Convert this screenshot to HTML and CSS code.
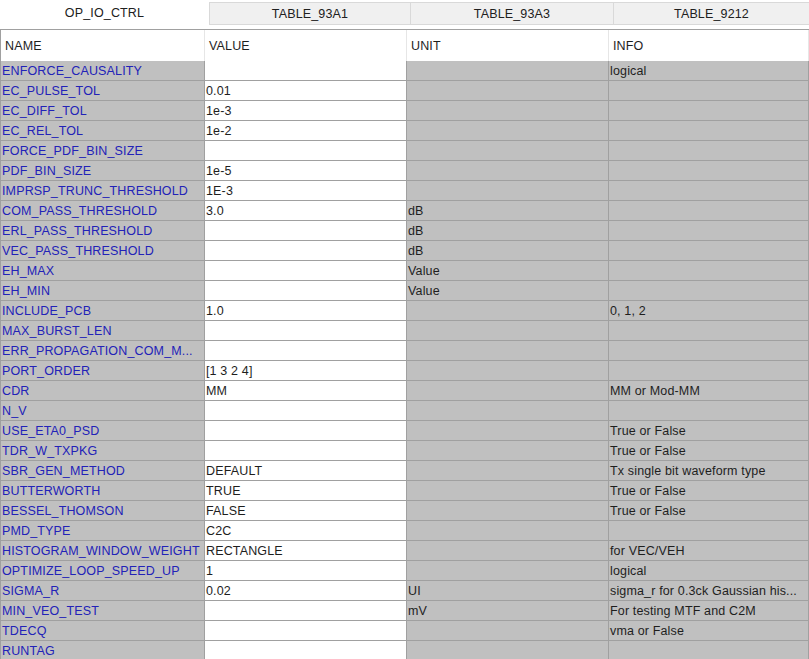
FILE: index.html
```html
<!DOCTYPE html>
<html>
<head>
  <meta charset="utf-8">
  <title>OP_IO_CTRL</title>
  <link rel="stylesheet" href="styles.css">
</head>
<body>
  <div class="tabs">
    <div class="tab active">OP_IO_CTRL</div>
    <div class="tab">TABLE_93A1</div>
    <div class="tab">TABLE_93A3</div>
    <div class="tab">TABLE_9212</div>
  </div>

  <div class="grid">
    <div class="head">NAME</div><div class="head">VALUE</div><div class="head">UNIT</div><div class="head">INFO</div>

    <div class="name">ENFORCE_CAUSALITY</div><div class="val"></div><div class="cell"></div><div class="cell">logical</div>
    <div class="name">EC_PULSE_TOL</div><div class="val">0.01</div><div class="cell"></div><div class="cell"></div>
    <div class="name">EC_DIFF_TOL</div><div class="val">1e-3</div><div class="cell"></div><div class="cell"></div>
    <div class="name">EC_REL_TOL</div><div class="val">1e-2</div><div class="cell"></div><div class="cell"></div>
    <div class="name">FORCE_PDF_BIN_SIZE</div><div class="val"></div><div class="cell"></div><div class="cell"></div>
    <div class="name">PDF_BIN_SIZE</div><div class="val">1e-5</div><div class="cell"></div><div class="cell"></div>
    <div class="name">IMPRSP_TRUNC_THRESHOLD</div><div class="val">1E-3</div><div class="cell"></div><div class="cell"></div>
    <div class="name">COM_PASS_THRESHOLD</div><div class="val">3.0</div><div class="cell">dB</div><div class="cell"></div>
    <div class="name">ERL_PASS_THRESHOLD</div><div class="val"></div><div class="cell">dB</div><div class="cell"></div>
    <div class="name">VEC_PASS_THRESHOLD</div><div class="val"></div><div class="cell">dB</div><div class="cell"></div>
    <div class="name">EH_MAX</div><div class="val"></div><div class="cell">Value</div><div class="cell"></div>
    <div class="name">EH_MIN</div><div class="val"></div><div class="cell">Value</div><div class="cell"></div>
    <div class="name">INCLUDE_PCB</div><div class="val">1.0</div><div class="cell"></div><div class="cell">0, 1, 2</div>
    <div class="name">MAX_BURST_LEN</div><div class="val"></div><div class="cell"></div><div class="cell"></div>
    <div class="name">ERR_PROPAGATION_COM_M...</div><div class="val"></div><div class="cell"></div><div class="cell"></div>
    <div class="name">PORT_ORDER</div><div class="val">[1 3 2 4]</div><div class="cell"></div><div class="cell"></div>
    <div class="name">CDR</div><div class="val">MM</div><div class="cell"></div><div class="cell">MM or Mod-MM</div>
    <div class="name">N_V</div><div class="val"></div><div class="cell"></div><div class="cell"></div>
    <div class="name">USE_ETA0_PSD</div><div class="val"></div><div class="cell"></div><div class="cell">True or False</div>
    <div class="name">TDR_W_TXPKG</div><div class="val"></div><div class="cell"></div><div class="cell">True or False</div>
    <div class="name">SBR_GEN_METHOD</div><div class="val">DEFAULT</div><div class="cell"></div><div class="cell">Tx single bit waveform type</div>
    <div class="name">BUTTERWORTH</div><div class="val">TRUE</div><div class="cell"></div><div class="cell">True or False</div>
    <div class="name">BESSEL_THOMSON</div><div class="val">FALSE</div><div class="cell"></div><div class="cell">True or False</div>
    <div class="name">PMD_TYPE</div><div class="val">C2C</div><div class="cell"></div><div class="cell"></div>
    <div class="name">HISTOGRAM_WINDOW_WEIGHT</div><div class="val">RECTANGLE</div><div class="cell"></div><div class="cell">for VEC/VEH</div>
    <div class="name">OPTIMIZE_LOOP_SPEED_UP</div><div class="val">1</div><div class="cell"></div><div class="cell">logical</div>
    <div class="name">SIGMA_R</div><div class="val">0.02</div><div class="cell">UI</div><div class="cell">sigma_r for 0.3ck Gaussian his...</div>
    <div class="name">MIN_VEO_TEST</div><div class="val"></div><div class="cell">mV</div><div class="cell">For testing MTF and C2M</div>
    <div class="name">TDECQ</div><div class="val"></div><div class="cell"></div><div class="cell">vma or False</div>
    <div class="name">RUNTAG</div><div class="val"></div><div class="cell"></div><div class="cell"></div>
  </div>
</body>
</html>
```

FILE: styles.css
```css
html, body {
  margin: 0;
  padding: 0;
  background: #ffffff;
  overflow: hidden;
}

* {
  box-sizing: border-box;
  font-family: "Liberation Sans", Arial, sans-serif;
  font-size: 12.5px;
  letter-spacing: 0.15px;
}

/* tab strip */
.tabs {
  display: grid;
  grid-template-columns: 209px 201px 203px 1fr;
  height: 25px;
  margin-bottom: 4px;
}

.tab {
  display: flex;
  align-items: center;
  justify-content: center;
  margin-top: 2px;
  background: #f0f0f0;
  border: 1px solid #d9d9d9;
  border-right: none;
  color: #202020;
}

.tab.active {
  margin-top: 0;
  padding-top: 1px;
  background: #ffffff;
  border: none;
}

/* table */
.grid {
  display: grid;
  grid-template-columns: 204px 202px 202px 1fr;
  grid-template-rows: 31px;
  grid-auto-rows: 20px;
  border-top: 1px solid #a0a0a0;
  border-left: 1px solid #a0a0a0;
}

.grid > div {
  white-space: nowrap;
  overflow: hidden;
  padding-left: 1px;
  line-height: 20px;
  color: #1e1e1e;
  background: #c0c0c0;
  border-right: 1px solid #a0a0a0;
  border-bottom: 1px solid #a0a0a0;
}

.grid > .head {
  line-height: 32px;
  padding-left: 4px;
  background: #ffffff;
  border-right: 1px solid #e6e6e6;
  border-bottom: none;
}

.grid > .name {
  color: #2222b8;
}

.grid > .val {
  background: #ffffff;
}
```
